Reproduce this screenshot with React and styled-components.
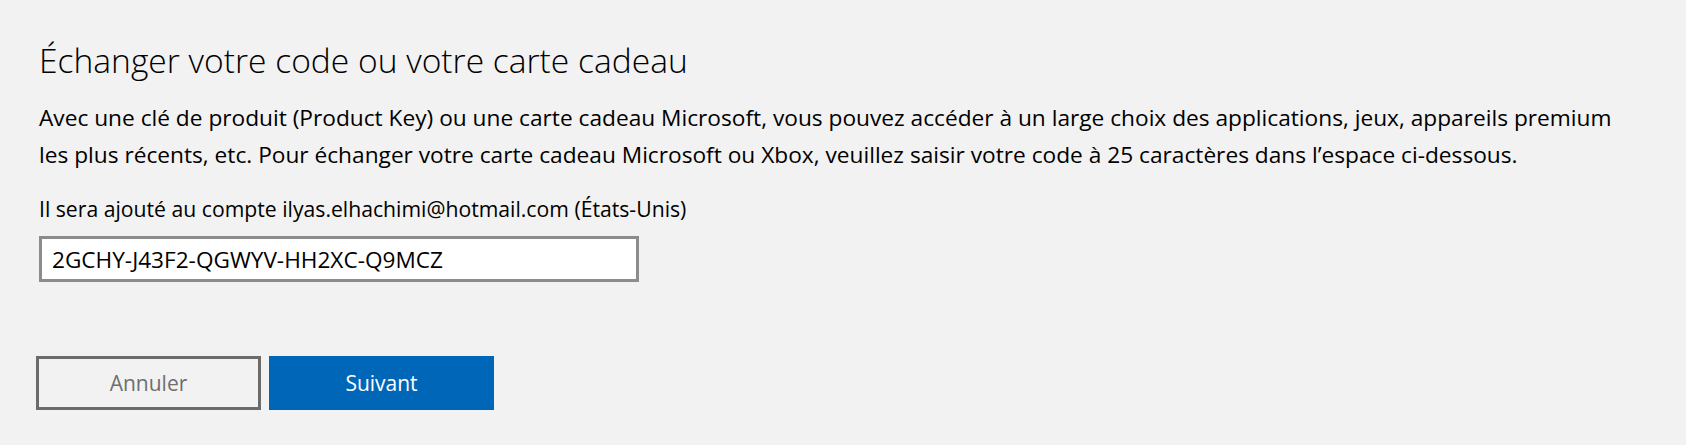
import { createGlobalStyle, styled } from "styled-components";

const GlobalStyle = createGlobalStyle`
  html, body {
    margin: 0;
    padding: 0;
    background: #f2f2f2;
  }
  body {
    font-family: "Open Sans", "Noto Sans", "Liberation Sans", sans-serif;
    color: #000;
  }
`;

const StyledPage = styled.div`
  width: 1686px;
  height: 445px;
  box-sizing: border-box;
  padding: 37px 39px 0;
  background: #f2f2f2;
`;

const Title = styled.h1`
  margin: 0;
  font-size: 33.6px;
  font-weight: 300;
  line-height: 46px;
`;

const Description = styled.p`
  margin: 16px 0 0;
  font-size: 22.7px;
  line-height: 37px;
  white-space: nowrap;
`;

const Account = styled.p`
  margin: 22px 0 0;
  font-size: 21.2px;
  line-height: 28px;
`;

const CodeInput = styled.input`
  display: block;
  box-sizing: border-box;
  width: 600px;
  height: 46px;
  margin-top: 13px;
  padding: 0 10px;
  border: 3px solid #8c8c8c;
  background: #fff;
  font-family: inherit;
  font-size: 22.6px;
  color: #000;
  outline: none;
`;

const ButtonRow = styled.div`
  display: flex;
  gap: 8px;
  margin-top: 74px;
  margin-left: -3px;
`;

const ActionButton = styled.button`
  box-sizing: border-box;
  width: 225px;
  height: 54px;
  padding: 0;
  border: ${(props) => (props.$primary ? "none" : "3px solid #6b6b6b")};
  background-color: ${(props) => (props.$primary ? "#0067b8" : "transparent")};
  color: ${(props) => (props.$primary ? "#fff" : "#6e6e6e")};
  font-family: inherit;
  font-size: 21px;
  text-align: center;
  cursor: pointer;
`;

const App = () => {
  return (
    <>
      <GlobalStyle />
      <StyledPage>
        <Title>Échanger votre code ou votre carte cadeau</Title>
        <Description>
          Avec une clé de produit (Product Key) ou une carte cadeau Microsoft, vous pouvez accéder à un large choix des applications, jeux, appareils premium
          <br />
          les plus récents, etc. Pour échanger votre carte cadeau Microsoft ou Xbox, veuillez saisir votre code à 25 caractères dans l’espace ci-dessous.
        </Description>
        <Account>
          Il sera ajouté au compte ilyas.elhachimi@hotmail.com (États-Unis)
        </Account>
        <CodeInput defaultValue="2GCHY-J43F2-QGWYV-HH2XC-Q9MCZ" />
        <ButtonRow>
          <ActionButton>Annuler</ActionButton>
          <ActionButton $primary>Suivant</ActionButton>
        </ButtonRow>
      </StyledPage>
    </>
  );
};

export default App;
